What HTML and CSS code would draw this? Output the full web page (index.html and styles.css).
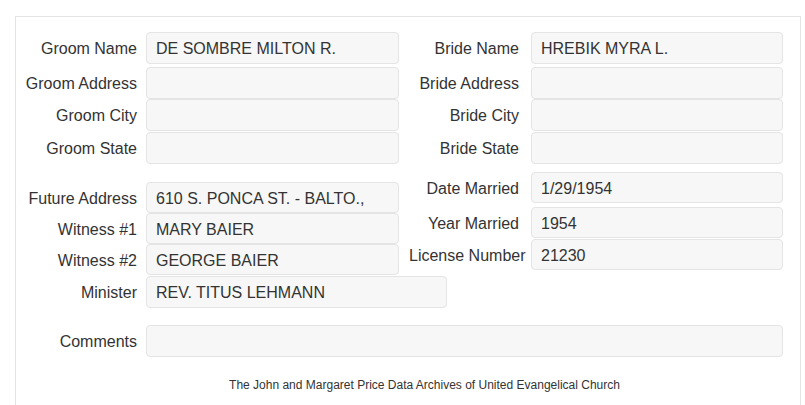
FILE: index.html
```html
<!DOCTYPE html>
<html>
<head>
<meta charset="utf-8">
<link rel="stylesheet" href="styles.css">
</head>
<body>
<div class="panel">
  <div class="top">
    <div class="col col-left">
      <div class="row r1"><label class="lbl">Groom Name</label><div class="field">DE SOMBRE MILTON R.</div></div>
      <div class="row r2"><label class="lbl">Groom Address</label><div class="field"></div></div>
      <div class="row r3"><label class="lbl">Groom City</label><div class="field"></div></div>
      <div class="row r4"><label class="lbl">Groom State</label><div class="field"></div></div>
    </div>
    <div class="col col-right">
      <div class="row r1"><label class="lbl">Bride Name</label><div class="field">HREBIK MYRA L.</div></div>
      <div class="row r2"><label class="lbl">Bride Address</label><div class="field"></div></div>
      <div class="row r3"><label class="lbl">Bride City</label><div class="field"></div></div>
      <div class="row r4"><label class="lbl">Bride State</label><div class="field"></div></div>
    </div>
  </div>
  <div class="mid">
    <div class="col col-left mid-left">
      <div class="row s1"><label class="lbl">Future Address</label><div class="field">610 S. PONCA ST. - BALTO.,</div></div>
      <div class="row s2"><label class="lbl">Witness #1</label><div class="field">MARY BAIER</div></div>
      <div class="row s3"><label class="lbl">Witness #2</label><div class="field">GEORGE BAIER</div></div>
      <div class="row s4"><label class="lbl">Minister</label><div class="field wide">REV. TITUS LEHMANN</div></div>
    </div>
    <div class="col col-right mid-right">
      <div class="row t1"><label class="lbl">Date Married</label><div class="field">1/29/1954</div></div>
      <div class="row t2"><label class="lbl">Year Married</label><div class="field">1954</div></div>
      <div class="row t3"><label class="lbl">License Number</label><div class="field">21230</div></div>
    </div>
  </div>
  <div class="row comments"><label class="lbl">Comments</label><div class="field full"></div></div>
  <p class="footer">The John and Margaret Price Data Archives of United Evangelical Church</p>
</div>
</body>
</html>
```

FILE: styles.css
```css
html, body {
  margin: 0;
  padding: 0;
  background: #ffffff;
  overflow: hidden;
}
body {
  font-family: "Liberation Sans", Arial, sans-serif;
  color: #333333;
}
.panel {
  margin: 16px 0 0 15px;
  width: 786px;
  height: 389px;
  box-sizing: border-box;
  border: 1px solid #e3e3e3;
  border-bottom: none;
  padding-top: 15px;
}
.top, .mid {
  display: flex;
  align-items: flex-start;
}
.col {
  display: flex;
  flex-direction: column;
  flex-shrink: 0;
}
.col-left {
  width: 383px;
}
.col-right {
  width: 384px;
  padding-left: 10px;
  box-sizing: border-box;
}
.row {
  display: flex;
  align-items: center;
  height: 32px;
}
.lbl {
  flex-shrink: 0;
  font-size: 16px;
  padding-top: 2px;
  text-align: right;
  white-space: nowrap;
}
.col-left .lbl, .comments .lbl {
  width: 121px;
  margin-right: 9px;
}
.col-right .lbl {
  width: 110px;
  margin-right: 12px;
}
.field {
  flex-shrink: 0;
  box-sizing: border-box;
  height: 100%;
  background: #f7f7f7;
  border: 1px solid #e4e4e4;
  border-radius: 4px;
  padding: 1px 9px 0;
  font-size: 16px;
  line-height: 30px;
  white-space: nowrap;
  overflow: hidden;
}
.col-left .field {
  width: 253px;
}
.col-right .field {
  width: 252px;
}
.col-left .field.wide {
  width: 301px;
}
.r1 { margin-bottom: 3px; }
.r3 { margin-bottom: 1px; }

.mid {
  margin-top: 8px;
}
.mid-left {
  padding-top: 10px;
}
.s1, .s2, .s3 { height: 31px; }
.s4 { margin-top: 1px; }
.t1, .t2, .t3 { height: 31px; }
.t1 { margin-bottom: 4px; }
.t2 { margin-bottom: 1px; }

.comments {
  margin-top: 17px;
}
.field.full {
  width: 637px;
}
.footer {
  margin: 20px 0 0 0;
  padding-left: 33px;
  text-align: center;
  font-size: 12px;
  line-height: 17px;
  color: #333333;
}
```
